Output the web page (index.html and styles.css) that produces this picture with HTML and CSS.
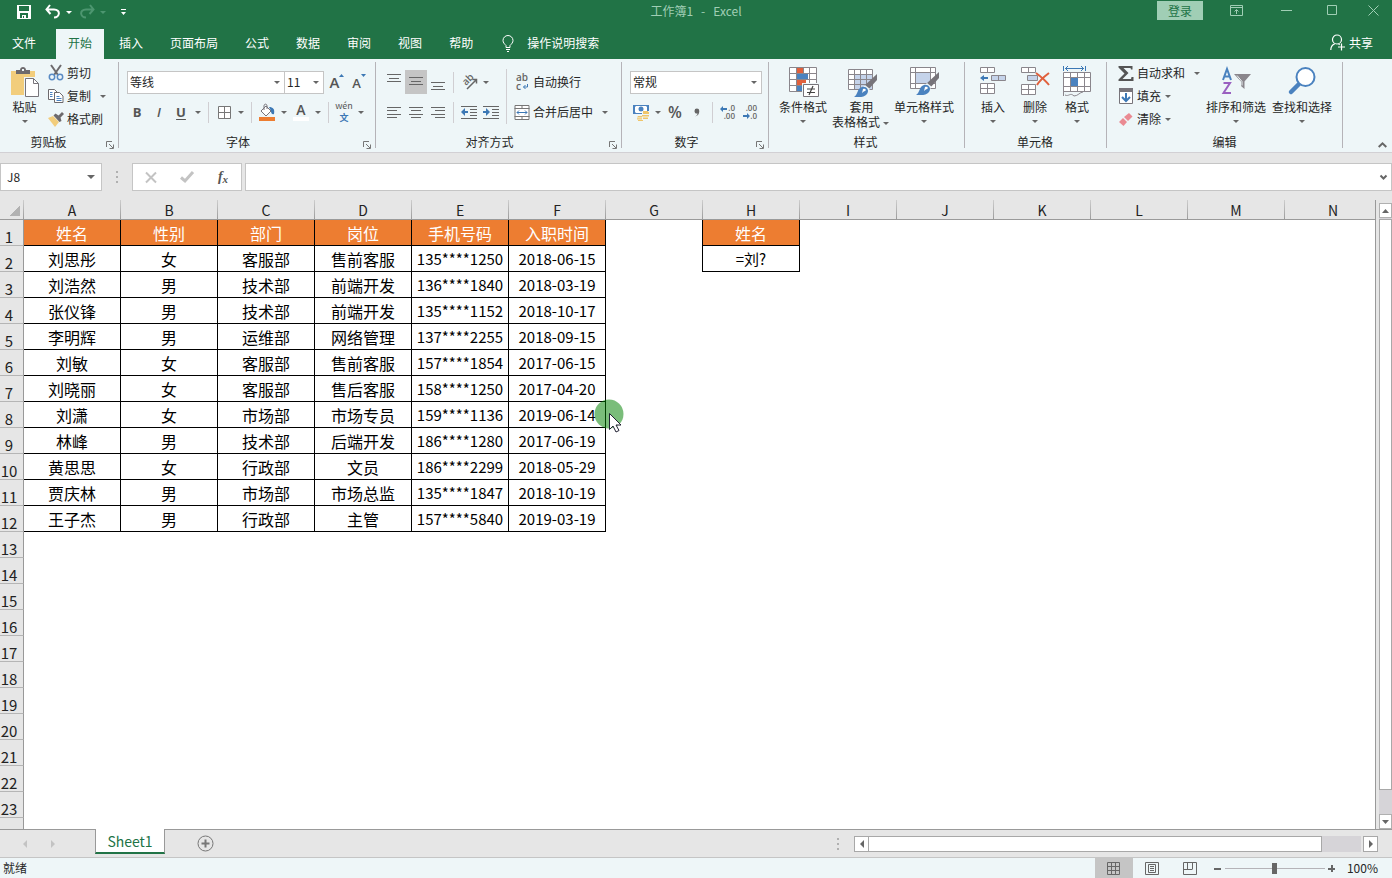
FILE: index.html
```html
<!DOCTYPE html>
<html lang="zh-CN">
<head>
    <meta charset="UTF-8">
    <title>工作簿1 - Excel</title>
    <meta name="viewport" content="width=device-width, initial-scale=1">
    <link rel="stylesheet" href="styles.css">
</head>
<body>
<header class="top">
    <div class="titlebar">
        <div class="quick">
            <button class="q-btn" aria-label="保存"><svg width="14" height="14" viewBox="0 0 14 14"><path d="M0 0h14v14H0z" fill="#fff"/><path d="M2 1h10v5H2zM3 8h8v5H3z" fill="#217346"/><path d="M5 10h4v3H5z" fill="#fff"/><path d="M6 11h1v2H6z" fill="#217346"/></svg></button>
            <button class="q-btn undo" aria-label="撤销"><svg width="16" height="14" viewBox="0 0 16 14" fill="none" stroke="#fff" stroke-width="2"><path d="M5 0L1.500 4.500 5.500 9M2 4.500h7c7 0 6 8 0 8"/></svg></button>
            <button class="caret-btn light" aria-label="撤销列表"><i class="caret"></i></button>
            <button class="q-btn redo" aria-label="恢复"><svg width="16" height="14" viewBox="0 0 16 14" fill="none" stroke="#4d9670" stroke-width="2"><path d="M11 0l3.500 4.500L10.500 9M14 4.500H7c-7 0-6 8 0 8"/></svg></button>
            <button class="caret-btn dim" aria-label="恢复列表"><i class="caret"></i></button>
            <button class="q-btn more" aria-label="自定义快速访问工具栏"><svg width="5" height="7" viewBox="0 0 5 7" fill="#fff"><path d="M0 0h5v1H0zM0 3h5L2.500 6z"/></svg></button>
        </div>
        <div class="title">工作簿1&nbsp;&nbsp; -&nbsp;&nbsp; Excel</div>
        <div class="win">
            <button class="login">登录</button>
            <button class="win-btn" aria-label="功能区显示选项"><svg width="13" height="11" viewBox="0 0 13 11" fill="none" stroke="#a0ceb5"><path d="M.5.5h12v10H.5zM.5 2.500h12M6.500 9V5M4.500 6.500l2-2 2 2"/></svg></button>
            <button class="win-btn" aria-label="最小化"><svg width="11" height="11" viewBox="0 0 11 11" stroke="#a0ceb5"><path d="M0 5.500h11"/></svg></button>
            <button class="win-btn" aria-label="最大化"><svg width="11" height="11" viewBox="0 0 11 11" fill="none" stroke="#a0ceb5"><path d="M.5.5h9v9h-9z"/></svg></button>
            <button class="win-btn last" aria-label="关闭"><svg width="11" height="11" viewBox="0 0 11 11" stroke="#a0ceb5"><path d="M.5.5l10 10M10.500.5l-10 10"/></svg></button>
        </div>
    </div>
    <nav class="tabs">
        <button class="tab file">文件</button>
        <button class="tab active">开始</button>
        <button class="tab">插入</button>
        <button class="tab">页面布局</button>
        <button class="tab">公式</button>
        <button class="tab">数据</button>
        <button class="tab">审阅</button>
        <button class="tab">视图</button>
        <button class="tab">帮助</button>
        <button class="tell"><svg width="12" height="17" viewBox="0 0 12 17" fill="none" stroke="#fff"><path d="M4 12.500v-2C2.500 9 1 7.500 1 5.500a5 5 0 0 1 10 0c0 2-1.500 3.500-3 5v2zM4 14.500h4M5 16.500h2"/></svg>操作说明搜索</button>
        <button class="share"><svg width="16" height="17" viewBox="0 0 16 17" fill="none" stroke="#fff" stroke-width="1.200"><circle cx="7" cy="5.500" r="4.500"/><path d="M.8 16c0-3.500 2-5.500 4-6.300M8.500 10l1.200.8M11.500 9.500v7M8 13h7"/></svg>共享</button>
    </nav>
</header>

<section class="ribbon">
    <div class="group clipboard">
        <div class="tools">
            <button class="big paste">
                <svg width="28" height="31" viewBox="1 0 28 31"><path d="M1 4h24v24H1z" fill="#f2cd7c"/><path d="M6 3h4c0-4 6-4 6 0h4v4H6z" fill="#6d6a6d"/><path d="M12 2h2v2h-2z" fill="#eef6f8"/><path d="M14 10h11l5 5v16H14z" fill="#eef6f8"/><path d="M15.500 11.500h8l5 5v13h-13z" fill="#fff" stroke="#77747a"/><path d="M23.500 11.500v5h5" fill="none" stroke="#77747a"/></svg>
                <span>粘贴</span><i class="caret"></i>
            </button>
            <div class="stack">
                <button class="small"><svg width="16" height="16" viewBox="0 0 16 16" fill="none"><path d="M3 0l7 10M13 0L6 10" stroke="#6d6a6d" stroke-width="2"/><circle cx="4" cy="12" r="2.700" stroke="#5a8bc4" stroke-width="1.500"/><circle cx="12" cy="12" r="2.700" stroke="#5a8bc4" stroke-width="1.500"/></svg>剪切</button>
                <button class="small"><svg width="16" height="14" viewBox="0 0 16 14" fill="#fff" stroke="#6d6a6d"><path d="M.5.5h6l3 3v7h-9z"/><path d="M6.500 3.500h5l3.500 3.500v6.500H6.500z"/><path d="M2 3.500h2.500M2 5.500h2.500M2 7.500h2.500M8.500 7.500h3M8.500 9.500h5M8.500 11.500h5" stroke="#4a82bf"/></svg>复制<i class="caret far"></i></button>
                <button class="small"><svg width="16" height="15" viewBox="0 0 16 15"><path d="M0 6l5-2 6 6-4 5z" fill="#f2cd7c"/><path d="M5.500 3.500l2-2 3 2L14 0l2 2-3.500 3.500 1 3.500-2 1z" fill="#6d6a6d"/></svg>格式刷</button>
            </div>
        </div>
        <div class="caption">剪贴板<button class="launch" aria-label="剪贴板设置"><svg width="8" height="8" viewBox="0 0 8 8" fill="none" stroke="#777"><path d="M.5 6V.5H6M3 3l4 4M7.500 3.500v4h-4"/></svg></button></div>
    </div>

    <div class="group font">
        <div class="rows">
            <div class="row">
                <label class="combo face"><select aria-label="字体"><option>等线</option></select><i class="caret"></i></label>
                <label class="combo size"><select aria-label="字号"><option>11</option></select><i class="caret"></i></label>
                <button class="icon grow" aria-label="增大字号">A<svg width="5" height="3" viewBox="0 0 5 3"><path d="M0 3h5L2.500 0z" fill="#3c78b5"/></svg></button>
                <button class="icon shrink" aria-label="减小字号">A<svg width="5" height="3" viewBox="0 0 5 3"><path d="M0 0h5L2.500 3z" fill="#3c78b5"/></svg></button>
            </div>
            <div class="row">
                <button class="icon letter b">B</button>
                <button class="icon letter i">I</button>
                <button class="icon letter u">U</button>
                <button class="caret-btn" aria-label="下划线样式"><i class="caret"></i></button>
                <i class="sep"></i>
                <button class="icon" aria-label="边框"><svg width="13" height="13" viewBox="0 0 13 13" fill="#fff" stroke="#777"><path d="M.5.5h12v12H.5zM6.500 0v13M0 6.500h13"/></svg></button>
                <button class="caret-btn" aria-label="边框样式"><i class="caret"></i></button>
                <i class="sep"></i>
                <button class="icon" aria-label="填充颜色"><svg width="16" height="17" viewBox="0 0 16 17"><path d="M2 7l5-5 5 5-5 5z" fill="#fff" stroke="#77747a"/><path d="M5 6V2c0-2.500 3-2.500 3 0v3" fill="none" stroke="#77747a"/><path d="M10 3c4 0 6 2 5 7-2 1-3-1-3-3z" fill="#3c78b5"/><path d="M0 13h16v4H0z" fill="#ed7d31"/></svg></button>
                <button class="caret-btn" aria-label="选择填充颜色"><i class="caret"></i></button>
                <button class="icon letter color">A<i class="swatch"></i></button>
                <button class="caret-btn" aria-label="选择字体颜色"><i class="caret"></i></button>
                <i class="sep"></i>
                <button class="icon wen"><span>wén</span><b>文</b></button>
                <button class="caret-btn" aria-label="拼音设置"><i class="caret"></i></button>
            </div>
        </div>
        <div class="caption">字体<button class="launch" aria-label="字体设置"><svg width="8" height="8" viewBox="0 0 8 8" fill="none" stroke="#777"><path d="M.5 6V.5H6M3 3l4 4M7.500 3.500v4h-4"/></svg></button></div>
    </div>

    <div class="group align">
        <div class="tools">
            <div class="rows">
                <div class="row">
                    <button class="icon" aria-label="顶端对齐"><svg width="14" height="17" viewBox="0 0 14 17" stroke="#666"><path d="M0 .5h14M2 4.500h10M0 7.500h14"/></svg></button>
                    <button class="icon on" aria-label="垂直居中"><svg width="14" height="17" viewBox="0 0 14 17" stroke="#666"><path d="M0 3.500h14M2 7.500h10M0 10.500h14"/></svg></button>
                    <button class="icon" aria-label="底端对齐"><svg width="14" height="17" viewBox="0 0 14 17" stroke="#666"><path d="M0 8.500h14M2 12.500h10M0 15.500h14"/></svg></button>
                    <i class="sep"></i>
                    <button class="icon" aria-label="方向"><svg width="17" height="16" viewBox="0 0 17 16" fill="none" stroke="#666" stroke-width="1.500"><text class="slant" transform="translate(5 12) rotate(-45)" x="0" y="0">ab</text><path d="M6 15l9-9M11.500 5.500H15.500v4"/></svg></button>
                    <button class="caret-btn" aria-label="文字方向"><i class="caret"></i></button>
                </div>
                <div class="row">
                    <button class="icon" aria-label="左对齐"><svg width="14" height="13" viewBox="0 0 14 13" stroke="#666"><path d="M0 1.500h14M0 4.500h10M0 8.500h14M0 11.500h10"/></svg></button>
                    <button class="icon" aria-label="居中"><svg width="14" height="13" viewBox="0 0 14 13" stroke="#666"><path d="M0 1.500h14M2 4.500h10M0 8.500h14M2 11.500h10"/></svg></button>
                    <button class="icon" aria-label="右对齐"><svg width="14" height="13" viewBox="0 0 14 13" stroke="#666"><path d="M0 1.500h14M4 4.500h10M0 8.500h14M4 11.500h10"/></svg></button>
                    <i class="sep"></i>
                    <button class="icon" aria-label="减少缩进"><svg width="16" height="13" viewBox="0 0 16 13" stroke="#666"><path d="M0 .5h16M9 3.500h7M9 6.500h7M9 9.500h7M0 12.500h16"/><path d="M0 6l4-4v3h3v2H4v3z" fill="#3c78b5" stroke="none"/></svg></button>
                    <button class="icon" aria-label="增加缩进"><svg width="16" height="13" viewBox="0 0 16 13" stroke="#666"><path d="M0 .5h16M9 3.500h7M9 6.500h7M9 9.500h7M0 12.500h16"/><path d="M7 6L3 2v3H0v2h3v3z" fill="#3c78b5" stroke="none"/></svg></button>
                </div>
            </div>
            <i class="sep tall"></i>
            <div class="rows">
                <div class="row"><button class="small"><svg width="14" height="18" viewBox="0 0 14 18"><text class="abc" x="1" y="8">ab</text><text class="abc" x="1" y="17">c</text><path d="M12.500 11v3H8.500M10.500 12l-2 2 2 2" fill="none" stroke="#3c78b5"/></svg>自动换行</button></div>
                <div class="row"><button class="small"><svg width="15" height="15" viewBox="0 0 15 15" fill="#fff" stroke="#777"><path d="M.5.5h14v14H.5zM0 3.500h15M0 11.500h15M7.500 0v3.500M7.500 11.500V15"/><path d="M2.500 7.500h10M4.500 5.500l-2 2 2 2M10.500 5.500l2 2-2 2" fill="none" stroke="#3c78b5"/></svg>合并后居中</button><button class="caret-btn wide" aria-label="合并选项"><i class="caret"></i></button></div>
            </div>
        </div>
        <div class="caption">对齐方式<button class="launch" aria-label="对齐设置"><svg width="8" height="8" viewBox="0 0 8 8" fill="none" stroke="#777"><path d="M.5 6V.5H6M3 3l4 4M7.500 3.500v4h-4"/></svg></button></div>
    </div>

    <div class="group number">
        <div class="rows">
            <div class="row"><label class="combo format"><select aria-label="数字格式"><option>常规</option></select><i class="caret"></i></label></div>
            <div class="row">
                <button class="icon" aria-label="会计数字格式"><svg width="17" height="17" viewBox="0 0 17 17"><path d="M0 1h16v9H0z" fill="#4a82bf"/><path d="M2 3l1-1h10l1 1v5l-1 1H3L2 8z" fill="#fff"/><circle cx="8" cy="5" r="2.500" fill="#4a82bf"/><path d="M9 7h8v7l-5 3H4v-5h5z" fill="#eef6f8"/><path d="M10 7h5v1h1v2h-6zM9 11h7v1.500H9zM10 13.500h5V15h-5zM5 12h4v1.500H4zM4 14.300h5v1.200H4zM5 16h5v1H5z" fill="#efc56a"/></svg></button>
                <button class="caret-btn" aria-label="货币符号"><i class="caret"></i></button>
                <button class="icon percent">%</button>
                <button class="icon" aria-label="千位分隔样式"><svg width="6" height="9" viewBox="0 0 6 9"><path d="M1 8.500c2-1 2.500-2 2.500-3C2 6 .5 4.800.5 3a2.400 2.400 0 0 1 4.800 0c0 3-1.500 5-4.300 5.500z" fill="#666"/></svg></button>
                <i class="sep"></i>
                <button class="icon" aria-label="增加小数位数"><svg width="16" height="15" viewBox="0 0 16 15"><path d="M0 4l3-3v2h4v2H3v2z" fill="#3c78b5"/><text class="digits" x="15" y="6">.0</text><text class="digits" x="15" y="14">.00</text></svg></button>
                <button class="icon" aria-label="减少小数位数"><svg width="16" height="15" viewBox="0 0 16 15"><path d="M8 11L5 8v2H1v2h4v2z" fill="#3c78b5"/><text class="digits" x="15" y="6">.00</text><text class="digits" x="15" y="14">.0</text></svg></button>
            </div>
        </div>
        <div class="caption">数字<button class="launch" aria-label="数字设置"><svg width="8" height="8" viewBox="0 0 8 8" fill="none" stroke="#777"><path d="M.5 6V.5H6M3 3l4 4M7.500 3.500v4h-4"/></svg></button></div>
    </div>

    <div class="group styles">
        <div class="tools">
            <button class="big">
                <svg width="32" height="31" viewBox="0 0 32 31"><path d="M2.500.5h27v24h-27z" fill="#fff"/><path d="M10 1h6v5h-6zM10 13h9v5h-9z" fill="#e0603c"/><path d="M10 7h11v5H10zM10 19h5v5h-5z" fill="#4a82bf"/><path d="M2.500.5h27v24h-27zM9.500 0v24M2 6.500h27M2 12.500h27M2 18.500h27M22.500 0v24M16.500 0v6" fill="none" stroke="#8a868c"/><path d="M15 16h17v15H15z" fill="#eef6f8"/><path d="M16.500 17.500h15v12h-15z" fill="#fff" stroke="#77747a"/><path d="M20 22h8M20 25.500h8M26 19l-4 9" stroke="#444" stroke-width="1.200"/></svg>
                <span>条件格式</span><i class="caret"></i>
            </button>
            <button class="big table-style">
                <svg width="32" height="31" viewBox="0 0 32 31"><path d="M2.500 2.500h24v20h-24z" fill="#fff"/><path d="M8 8h18v14H8z" fill="#c5d3ea"/><path d="M2.500 2.500h24v20h-24zM8.500 2v20M14.500 2v20M20.500 2v20M2 7.500h24M2 12.500h24M2 17.500h24" fill="none" stroke="#8a868c"/><path d="M31 7v6l-9 10-4-4z" fill="#77747a"/><path d="M19 18l5 4-2 2-5-4z" fill="#eef6f8"/><path d="M16 20c4-1 8 3 5 7-3 4-8 3-13 3 4-2 3-9 8-10z" fill="#4a82bf"/><path d="M17 22c2-1 4 1 2 2s-2 1-3 2z" fill="#fff"/></svg>
                <span>套用</span><span>表格格式<i class="caret"></i></span>
            </button>
            <button class="big">
                <svg width="32" height="31" viewBox="0 0 32 31"><path d="M2.500.5h25v21h-25z" fill="#fff"/><path d="M8 6h14v11H8z" fill="#c5d3ea"/><path d="M2.500.5h25v21h-25zM7.500 0v21M22.500 0v21M2 5.500h25M2 16.500h25" fill="none" stroke="#8a868c"/><path d="M31 5v6l-9 10-4-4z" fill="#77747a"/><path d="M19 16l5 4-2 2-5-4z" fill="#eef6f8"/><path d="M16 18c4-1 8 3 5 7-3 4-8 3-13 3 4-2 3-9 8-10z" fill="#4a82bf"/><path d="M17 20c2-1 4 1 2 2s-2 1-3 2z" fill="#fff"/></svg>
                <span>单元格样式</span><i class="caret"></i>
            </button>
        </div>
        <div class="caption">样式</div>
    </div>

    <div class="group cells">
        <div class="tools">
            <button class="big">
                <svg width="28" height="31" viewBox="0 0 28 31" fill="#fff" stroke="#8a868c"><path d="M1.500.5h14v5h-14zM8.500.5v5M1.500 16.500h14v10h-14zM8.500 16.500v10M1.500 21.500h14"/><path d="M12.500 8.500h14v5h-14zM19.500 8.500v5" fill="#c5d3ea"/><path d="M1 11l4-3v2h4v2H5v2z" fill="#3c78b5" stroke="none"/></svg>
                <span>插入</span><i class="caret"></i>
            </button>
            <button class="big">
                <svg width="30" height="31" viewBox="0 0 30 31" fill="#fff" stroke="#8a868c"><path d="M1.500.5h14v5h-14zM8.500.5v5M1.500 17.500h14v10h-14zM8.500 17.500v10M1.500 22.500h14"/><path d="M7.500 8.500h10v5h-10z" fill="#c5d3ea"/><path d="M16 6c4 3 9 7 13 12M29 6c-4 3-9 7-12 12" fill="none" stroke="#e0603c" stroke-width="2"/></svg>
                <span>删除</span><i class="caret"></i>
            </button>
            <button class="big">
                <svg width="30" height="31" viewBox="0 0 30 31" fill="none"><path d="M1.500 5.500h27v19h-27z" fill="#fff"/><path d="M1.500 29V5.500h27v19h-27M8.500 5.500v19M15.500 5.500v19M22.500 5.500v19M1.500 10.500h27M1.500 19.500h27M3 28c4 2 5-3 9 1 4 0 6-4 9-4" stroke="#8a868c"/><path d="M9 11h7v8H9z" fill="#4a82bf"/><path d="M1.500-1v5M23.500-1v5M3 1.500h19M6-1L3.500 1.500 6 4M19-1l2.500 2.500L19 4" stroke="#3c78b5"/></svg>
                <span>格式</span><i class="caret"></i>
            </button>
        </div>
        <div class="caption">单元格</div>
    </div>

    <div class="group edit">
        <div class="tools">
            <div class="stack">
                <button class="small"><svg width="15" height="15" viewBox="0 0 15 15"><path d="M0 0h14v3.500h-1.500L12 2H5l5 5-6 6h8.500l.5-2H15v4H0v-1.500L6 7.500 0 1.500z" fill="#555"/></svg>自动求和<i class="caret far"></i></button>
                <button class="small"><svg width="14" height="16" viewBox="0 0 14 16"><path d="M.5.5h13v15H.5z" fill="#fff" stroke="#77747a"/><path d="M0 0h14v4H0z" fill="#77747a"/><path d="M7 5v8M3 9l4 4 4-4" fill="none" stroke="#3c78b5" stroke-width="2"/></svg>填充<i class="caret"></i></button>
                <button class="small"><svg width="14" height="13" viewBox="0 0 14 13"><path d="M5 4l5-4 3.500 3.500L9 8z" fill="#ea8a92"/><path d="M4 5l4 4-3.500 4L0 9z" fill="#ea8a92"/></svg>清除<i class="caret"></i></button>
            </div>
            <button class="big">
                <svg width="30" height="31" viewBox="0 0 30 31" fill="none"><path d="M2 13L6 2l4 11M3.500 9.500h5" stroke="#4a82bf" stroke-width="2"/><path d="M2.500 16H9L2.500 26H10" stroke="#9a60c0" stroke-width="2"/><path d="M13 7h17l-6.500 7.500V22L20 19v-4.500z" fill="#8a868c"/><path d="M16 8.500l5 6v4" stroke="#eef6f8"/></svg>
                <span>排序和筛选</span><i class="caret"></i>
            </button>
            <button class="big">
                <svg width="28" height="31" viewBox="0 0 28 31"><path d="M11 17L3 25" stroke="#4a82bf" stroke-width="4.500" stroke-linecap="round"/><circle cx="17.500" cy="10" r="9" fill="#fff" stroke="#4a82bf" stroke-width="2"/></svg>
                <span>查找和选择</span><i class="caret"></i>
            </button>
        </div>
        <div class="caption">编辑</div>
    </div>
    <button class="collapse" aria-label="折叠功能区"><svg width="9" height="6" viewBox="0 0 9 6" fill="none" stroke="#666" stroke-width="2"><path d="M.7 5L4.500 1.300 8.300 5"/></svg></button>
</section>

<section class="formula">
    <label class="namebox"><input type="text" value="J8" aria-label="名称框"><i class="caret"></i></label>
    <i class="dots"></i>
    <div class="fx">
        <button aria-label="取消"><svg width="12" height="11" viewBox="0 0 12 11" stroke="#c3c3c3" stroke-width="2"><path d="M1 .5l10 10M11 .5l-10 10"/></svg></button>
        <button aria-label="输入"><svg width="14" height="12" viewBox="0 0 14 12" fill="none" stroke="#c3c3c3" stroke-width="3"><path d="M1 6.500L5 10l8-9"/></svg></button>
        <button class="fn" aria-label="插入函数">f<small>x</small></button>
    </div>
    <div class="entry">
        <input type="text" aria-label="编辑栏">
        <button aria-label="展开编辑栏"><svg width="7" height="5" viewBox="0 0 7 5" fill="none" stroke="#666" stroke-width="2"><path d="M.5.5l3 3 3-3"/></svg></button>
    </div>
</section>

<main class="book">
    <div class="sheet">
        <table class="grid">
            <colgroup><col class="num"><col span="14"></colgroup>
            <thead>
                <tr><th class="corner"></th><th>A</th><th>B</th><th>C</th><th>D</th><th>E</th><th>F</th><th>G</th><th>H</th><th>I</th><th>J</th><th>K</th><th>L</th><th>M</th><th>N</th></tr>
            </thead>
            <tbody>
                <tr class="head"><th>1</th><td class="d">姓名</td><td class="d">性别</td><td class="d">部门</td><td class="d">岗位</td><td class="d">手机号码</td><td class="d">入职时间</td><td class="edge"></td><td class="d">姓名</td><td colspan="6"></td></tr>
                <tr><th>2</th><td class="d">刘思彤</td><td class="d">女</td><td class="d">客服部</td><td class="d">售前客服</td><td class="d n">135****1250</td><td class="d n">2018-06-15</td><td class="edge"></td><td class="d n">=刘?</td><td colspan="6"></td></tr>
                <tr><th>3</th><td class="d">刘浩然</td><td class="d">男</td><td class="d">技术部</td><td class="d">前端开发</td><td class="d n">136****1840</td><td class="d n">2018-03-19</td><td colspan="8"></td></tr>
                <tr><th>4</th><td class="d">张仪锋</td><td class="d">男</td><td class="d">技术部</td><td class="d">前端开发</td><td class="d n">135****1152</td><td class="d n">2018-10-17</td><td colspan="8"></td></tr>
                <tr><th>5</th><td class="d">李明辉</td><td class="d">男</td><td class="d">运维部</td><td class="d">网络管理</td><td class="d n">137****2255</td><td class="d n">2018-09-15</td><td colspan="8"></td></tr>
                <tr><th>6</th><td class="d">刘敏</td><td class="d">女</td><td class="d">客服部</td><td class="d">售前客服</td><td class="d n">157****1854</td><td class="d n">2017-06-15</td><td colspan="8"></td></tr>
                <tr><th>7</th><td class="d">刘晓丽</td><td class="d">女</td><td class="d">客服部</td><td class="d">售后客服</td><td class="d n">158****1250</td><td class="d n">2017-04-20</td><td colspan="8"></td></tr>
                <tr><th>8</th><td class="d">刘潇</td><td class="d">女</td><td class="d">市场部</td><td class="d">市场专员</td><td class="d n">159****1136</td><td class="d n">2019-06-14</td><td colspan="8"></td></tr>
                <tr><th>9</th><td class="d">林峰</td><td class="d">男</td><td class="d">技术部</td><td class="d">后端开发</td><td class="d n">186****1280</td><td class="d n">2017-06-19</td><td colspan="8"></td></tr>
                <tr><th>10</th><td class="d">黄思思</td><td class="d">女</td><td class="d">行政部</td><td class="d">文员</td><td class="d n">186****2299</td><td class="d n">2018-05-29</td><td colspan="8"></td></tr>
                <tr><th>11</th><td class="d">贾庆林</td><td class="d">男</td><td class="d">市场部</td><td class="d">市场总监</td><td class="d n">135****1847</td><td class="d n">2018-10-19</td><td colspan="8"></td></tr>
                <tr><th>12</th><td class="d">王子杰</td><td class="d">男</td><td class="d">行政部</td><td class="d">主管</td><td class="d n">157****5840</td><td class="d n">2019-03-19</td><td colspan="8"></td></tr>
                <tr><th>13</th><td colspan="14"></td></tr>
                <tr><th>14</th><td colspan="14"></td></tr>
                <tr><th>15</th><td colspan="14"></td></tr>
                <tr><th>16</th><td colspan="14"></td></tr>
                <tr><th>17</th><td colspan="14"></td></tr>
                <tr><th>18</th><td colspan="14"></td></tr>
                <tr><th>19</th><td colspan="14"></td></tr>
                <tr><th>20</th><td colspan="14"></td></tr>
                <tr><th>21</th><td colspan="14"></td></tr>
                <tr><th>22</th><td colspan="14"></td></tr>
                <tr><th>23</th><td colspan="14"></td></tr>
                <tr><th></th><td colspan="14"></td></tr>
            </tbody>
        </table>
        <svg class="pointer" width="32" height="36" viewBox="0 0 32 36"><circle cx="15" cy="15" r="14.500" fill="#008000" fill-opacity=".52"/><path d="M15.500 14.500v16l3.500-3.500 3 6 3-1.500-3-5.500h5z" fill="#fff" stroke="#223"/></svg>
    </div>
    <div class="vscroll">
        <button aria-label="向上滚动"><svg width="7" height="4" viewBox="0 0 7 4"><path d="M0 4h7L3.500 0z" fill="#666"/></svg></button>
        <div class="track"><div class="thumb"></div></div>
        <button aria-label="向下滚动"><svg width="7" height="4" viewBox="0 0 7 4"><path d="M0 0h7L3.500 4z" fill="#666"/></svg></button>
    </div>
</main>

<section class="sheetbar">
    <button class="nav" aria-label="上一个"><svg width="4" height="8" viewBox="0 0 4 8"><path d="M4 0v8L0 4z" fill="#c3c3c3"/></svg></button>
    <button class="nav" aria-label="下一个"><svg width="4" height="8" viewBox="0 0 4 8"><path d="M0 0v8l4-4z" fill="#c3c3c3"/></svg></button>
    <button class="sheet-tab">Sheet1</button>
    <button class="add" aria-label="新工作表"><svg width="17" height="17" viewBox="0 0 17 17" fill="none" stroke="#777"><circle cx="8.500" cy="8.500" r="7.500"/><path d="M8.500 4.500v8M4.500 8.500h8" stroke-width="2"/></svg></button>
    <i class="dots"></i>
    <div class="hscroll">
        <button aria-label="向左滚动"><svg width="4" height="8" viewBox="0 0 4 8"><path d="M4 0v8L0 4z" fill="#666"/></svg></button>
        <div class="track"><div class="thumb"></div></div>
        <button aria-label="向右滚动"><svg width="4" height="8" viewBox="0 0 4 8"><path d="M0 0v8l4-4z" fill="#666"/></svg></button>
    </div>
</section>

<footer class="status">
    <span class="ready">就绪</span>
    <button class="view on" aria-label="普通"><svg width="13" height="13" viewBox="0 0 13 13" fill="none" stroke="#666"><path d="M.5.5h12v12H.5zM4.500 0v13M8.500 0v13M0 4.500h13M0 8.500h13"/></svg></button>
    <button class="view" aria-label="页面布局"><svg width="14" height="13" viewBox="0 0 14 13" fill="none" stroke="#666"><path d="M.5.5h13v12H.5zM3.500 2.500h7v8h-7zM5 4.500h4M5 6.500h4M5 8.500h4"/></svg></button>
    <button class="view" aria-label="分页预览"><svg width="14" height="13" viewBox="0 0 14 13" fill="none" stroke="#666"><path d="M.5.5h13v12H.5zM4.500 0v7.500M.5 7.500h8.500M9.500 0v7.500"/></svg></button>
    <button class="step" aria-label="缩小"><svg width="7" height="7" viewBox="0 0 7 7"><path d="M0 3h7v2H0z" fill="#666"/></svg></button>
    <input class="zoom" type="range" min="0" max="200" value="100" aria-label="缩放">
    <button class="step" aria-label="放大"><svg width="7" height="7" viewBox="0 0 7 7"><path d="M0 3h7v2H0zM3 0h2v7H3z" fill="#666"/></svg></button>
    <button class="percent-btn">100%</button>
</footer>
</body>
</html>
```
FILE: styles.css
```css
*{ margin:0; padding:0; box-sizing:border-box; }
body{ display:flex; flex-direction:column; height:100vh; overflow:hidden; font:12px/16px "Noto Sans CJK SC",sans-serif; color:#262626; background:#e6e6e6; }
button,input,select{ font:inherit; color:inherit; background:none; border:0; border-radius:0; outline:0; }
button{ display:flex; align-items:center; justify-content:center; white-space:nowrap; flex-shrink:0; }
svg{ display:block; flex-shrink:0; overflow:visible; }
.caret{ flex-shrink:0; width:0; height:0; border:3px solid transparent; border-top-color:#666; border-bottom:0; }
.caret-btn{ width:12px; height:24px; }
.caret-btn.wide{ width:24px; }
.light .caret{ border-top-color:#fff; }
.dim .caret{ border-top-color:#4d9670; }

/* title and tabs */
.top{ background:#217346; color:#fff; }
.titlebar{ display:grid; grid-template-columns:1fr auto 1fr; height:29px; }
.quick{ display:flex; align-items:center; height:24px; padding-left:14px; }
.q-btn{ width:20px; height:20px; }
.q-btn.undo{ margin-left:9px; }
.q-btn.redo{ margin-left:2px; }
.q-btn.more{ margin-left:4px; }
.title{ color:#a0ceb5; line-height:22px; }
.win{ display:flex; justify-content:flex-end; height:21px; }
.login{ width:46px; height:19px; margin:1px 10px 0 0; background:#a0ceb5; color:#217346; }
.win-btn{ width:46px; height:21px; }
.win-btn:nth-child(2){ margin-right:4px; }
.win-btn.last{ width:37px; }
.tabs{ display:flex; height:30px; }
.tab{ padding:0 12px 3px; margin-right:3px; }
.tab.file{ margin-right:8px; }
.tab.active{ background:#eef6f8; color:#217346; }
.tell{ gap:13px; margin-left:14px; padding-bottom:2px; }
.share{ gap:3px; margin-left:auto; padding:0 19px 3px 0; }

/* ribbon */
.ribbon{ display:flex; flex-shrink:0; height:94px; padding:3px 0 4px; background:#eef6f8; border-bottom:1px solid #d2d0d4; }
.group{ display:flex; flex-direction:column; flex-shrink:0; border-right:1px solid #b5b3b8; }
.clipboard{ width:119px; padding-left:4px; }
.font{ width:257px; padding-left:7px; }
.align{ width:246px; padding-left:7px; }
.number{ width:147px; padding-left:8px; }
.styles{ width:196px; padding-left:6px; }
.cells{ width:142px; padding-left:7px; }
.edit{ width:236px; padding-left:8px; }
.tools{ display:flex; }
.caption{ display:flex; justify-content:center; position:relative; margin-top:auto; padding-right:8px; line-height:12px; }
.clipboard .caption,.font .caption,.align .caption,.number .caption{ padding-right:25px; }
.launch{ position:absolute; right:4px; bottom:-1px; }
.stack{ display:flex; flex-direction:column; gap:1px; }
.small{ height:22px; justify-content:flex-start; }
.small > svg:first-child{ width:22px; }
.small .caret{ margin-left:4px; }
.small .caret.far{ margin-left:9px; }
.big{ flex-direction:column; justify-content:flex-start; height:70px; padding-top:5px; line-height:15px; }
.big svg{ margin-bottom:1px; }
.big > .caret{ margin-top:6px; }
.paste{ width:41px; }
.styles .big{ width:56px; }
.styles .table-style{ width:60px; align-items:flex-start; padding-left:1px; }
.styles .table-style svg,.styles .table-style svg + span{ align-self:center; }
.styles .table-style .caret{ display:inline-block; margin-left:3px; vertical-align:middle; }
.styles .big:last-child{ width:66px; }
.cells .big{ width:42px; }
.edit .big{ width:66px; }
.edit .stack{ width:88px; }
.rows{ display:flex; flex-direction:column; gap:6px; padding-top:8px; }
.row{ display:flex; align-items:center; height:24px; }
.icon{ width:22px; height:24px; color:#555; }
.icon.on{ background:#c5c5c5; }
.sep{ width:1px; height:21px; margin:0 4px; background:#d0ced2; flex-shrink:0; }
.sep.tall{ height:55px; margin-top:7px; }
.combo{ display:flex; align-items:center; height:23px; padding-right:4px; background:#fff; border:1px solid #c5c5c5; }
.combo select{ flex:1; min-width:0; height:21px; padding-left:2px; appearance:none; }
.face{ width:158px; margin-left:1px; }
.size{ width:40px; margin-left:-1px; }
.format{ width:132px; }
.grow,.shrink{ align-items:flex-start; font:600 15px/24px "Open Sans",sans-serif; }
.grow{ margin-left:2px; }
.shrink{ font-size:13px; line-height:26px; }
.grow svg,.shrink svg{ margin-top:4px; }
.letter{ font:700 13px/15px "Open Sans",sans-serif; }
.letter.i{ font-style:italic; font-weight:600; }
.letter.u{ text-decoration:underline; text-underline-offset:2px; }
.letter.color{ flex-direction:column; font-size:14px; font-weight:600; line-height:14px; }
.swatch{ width:16px; height:4px; background:#fff; }
.wen{ flex-direction:column; font-size:9px; line-height:12px; }
.wen b{ color:#3c78b5; }
.abc,.slant,.digits{ font:600 10px "Open Sans",sans-serif; fill:#666; stroke:none; }
.digits{ font-size:8px; text-anchor:end; }
.percent{ font:600 16px/20px "Open Sans",sans-serif; }
.collapse{ margin-left:auto; padding:0 5px 0 0; align-self:flex-end; }

/* formula bar */
.formula{ display:flex; height:47px; padding:10px 0 9px; flex-shrink:0; }
.namebox{ display:flex; align-items:center; width:102px; padding:0 6px; background:#fff; border:1px solid #c5c5c5; }
.namebox input{ flex:1; min-width:0; }
.namebox .caret{ border-width:4px; border-bottom:0; }
.dots{ align-self:center; width:2px; height:12px; margin:0 14px; background:repeating-linear-gradient(#b0b0b0 0 2px,transparent 2px 5px); }
.fx{ display:flex; justify-content:space-around; width:110px; margin-right:3px; background:#fff; border:1px solid #c5c5c5; }
.fx button{ width:36px; }
.fn{ font:italic 700 14px/20px "Liberation Serif",serif; color:#555; }
.fn small{ padding-top:3px; font-size:11px; }
.entry{ display:flex; flex:1; background:#fff; border:1px solid #c5c5c5; }
.entry input{ flex:1; min-width:0; padding:0 6px; }
.entry button{ width:16px; }

/* sheet */
.book{ display:flex; flex:1; min-height:0; }
.sheet{ position:relative; flex:1; min-width:0; overflow:hidden; background:#fff; border-right:1px solid #999; }
.grid{ width:1382px; table-layout:fixed; border-collapse:separate; border-spacing:0; background:#fff; }
.grid .num{ width:24px; }
.grid th{ font-weight:400; background:#e6e6e6; color:#222; }
.grid thead th{ height:20px; font-size:14px; line-height:17px; border-bottom:1px solid #999; border-right:1px solid; border-image:linear-gradient(#d0d0d0,#999) 1; border-top:0; border-left:0; padding-top:2px; }
.grid thead .corner{ background:linear-gradient(135deg,transparent 50%,#b2b2b2 50%) 9px 5px/11px 11px no-repeat #e6e6e6; }
.grid tbody th{ height:26px; padding:8px 5px 0 0; font-size:15px; line-height:17px; border-right:1px solid #999; border-bottom:1px solid #b5b5b5; }
.grid td{ padding-top:1px; text-align:center; color:#000; font-size:16px; line-height:20px; white-space:nowrap; }
.grid td.d{ border-right:1px solid #000; border-bottom:1px solid #000; }
.grid td.n{ font-size:15px; }
.grid td.edge{ border-right:1px solid #000; }
.grid .head .d{ background:#ed7d31; color:#fff; }
.pointer{ position:absolute; left:594px; top:199px; }
.vscroll{ display:flex; flex-direction:column; width:13px; margin:3px 0 0 3px; }
.vscroll button{ height:15px; background:#fff; border:1px solid #b0b0b0; }
.vscroll .track{ flex:1; padding-top:1px; background:#d6d4d8; }
.vscroll .thumb{ height:96%; background:#fff; border:1px solid #a8a8a8; }

/* bottom bars */
.sheetbar{ display:flex; align-items:center; flex-shrink:0; height:29px; padding-right:14px; border-top:1px solid #999; border-bottom:1px solid #c5c5c5; }
.nav{ width:28px; height:26px; }
.nav:first-child{ margin-left:11px; }
.sheet-tab{ align-self:flex-start; width:70px; height:25px; margin:-1px 32px 0 28px; background:#fff; color:#217346; font-size:14px; border:1px solid #999; border-width:0 1px 2px; border-bottom-color:#217346; }
.sheetbar .dots{ margin:0 15px 0 auto; }
.hscroll{ display:flex; width:38%; height:16px; }
.hscroll button{ width:15px; background:#fff; border:1px solid #a8a8a8; }
.hscroll .track{ flex:1; margin-right:2px; background:#d6d4d8; }
.hscroll .thumb{ width:92%; height:16px; background:#fff; border:1px solid #a8a8a8; border-left:0; }
.status{ display:flex; align-items:center; flex-shrink:0; height:20px; padding-right:14px; background:#eef6f8; }
.ready{ flex:1; padding-left:3px; }
.view{ width:38px; height:20px; }
.view.on{ background:#c5c5c5; }
.step{ width:12px; height:20px; }
.view + .step{ margin-left:3px; }
.zoom{ width:100px; height:12px; margin:0 1px; appearance:none; background:linear-gradient(#b5b3b8,#b5b3b8) center/100% 1px no-repeat; }
.zoom::-webkit-slider-thumb{ appearance:none; width:5px; height:11px; background:#666; }
.percent-btn{ margin-left:9px; }
```
